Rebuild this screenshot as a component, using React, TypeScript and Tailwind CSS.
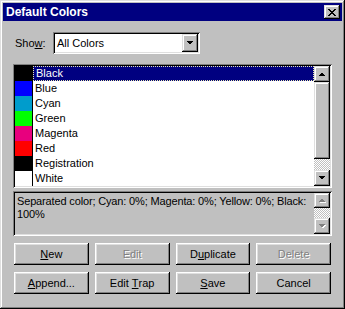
import React from "react";

const raised =
  "shadow-[inset_-1px_-1px_#000,inset_1px_1px_#fff,inset_-2px_-2px_#808080,inset_2px_2px_#dfdfdf]";
const sbBtn =
  "shadow-[inset_-1px_-1px_#000,inset_1px_1px_#dfdfdf,inset_-2px_-2px_#808080,inset_2px_2px_#fff]";
const sunken =
  "shadow-[inset_1px_1px_#808080,inset_-1px_-1px_#fff,inset_2px_2px_#000,inset_-2px_-2px_#dfdfdf]";
const checker =
  "bg-[repeating-conic-gradient(#fff_0_25%,#c0c0c0_0_50%)] bg-[length:2px_2px]";

const colors = [
  { name: "Black", swatch: "bg-black" },
  { name: "Blue", swatch: "bg-[#0000ff]" },
  { name: "Cyan", swatch: "bg-[#009ccc]" },
  { name: "Green", swatch: "bg-[#00ff00]" },
  { name: "Magenta", swatch: "bg-[#e8007e]" },
  { name: "Red", swatch: "bg-[#ff0000]" },
  { name: "Registration", swatch: "bg-black" },
  { name: "White", swatch: "bg-white" },
];

function Arrow({ dir, disabled }: { dir: "up" | "down"; disabled?: boolean }) {
  const pts = dir === "up" ? "0,4 7,4 3.5,0.5" : "0,0 7,0 3.5,3.5";
  return (
    <svg width="8" height="5" viewBox="0 0 8 5" shapeRendering="crispEdges">
      {disabled && <polygon points={pts} fill="#fff" transform="translate(1,1)" />}
      <polygon points={pts} fill={disabled ? "#808080" : "#000"} />
    </svg>
  );
}

function ScrollBtn({ dir, disabled, h = "h-[16px]" }: { dir: "up" | "down"; disabled?: boolean; h?: string }) {
  return (
    <div className={`w-[16px] ${h} bg-[#c0c0c0] flex items-center justify-center ${sbBtn}`}>
      <Arrow dir={dir} disabled={disabled} />
    </div>
  );
}

function Button({ children, disabled }: { children: React.ReactNode; disabled?: boolean }) {
  return (
    <div
      className={`h-[22px] flex items-center justify-center bg-[#c0c0c0] ${raised} ${
        disabled ? "text-[#808080] [text-shadow:1px_1px_0_#fff]" : "text-black"
      }`}
    >
      {children}
    </div>
  );
}

export default function App() {
  return (
    <div
      className={`w-[345px] h-[309px] bg-[#c0c0c0] p-[3px] flex flex-col font-['Liberation_Sans',Arial,sans-serif] text-[11px] text-black shadow-[inset_-1px_-1px_#000,inset_1px_1px_#dfdfdf,inset_-2px_-2px_#808080,inset_2px_2px_#fff]`}
    >
      {/* Title bar */}
      <div className="h-[18px] bg-[#000080] flex items-center justify-between pl-[3px] pr-[2px]">
        <span className="text-white font-bold text-[12px] leading-none">Default Colors</span>
        <div className={`w-[16px] h-[14px] bg-[#c0c0c0] flex items-center justify-center ${sbBtn}`}>
          <svg width="8" height="7" viewBox="0 0 8 7" shapeRendering="crispEdges">
            <path d="M0 0h2v1h-2zM6 0h2v1h-2zM1 1h2v1h-2zM5 1h2v1h-2zM2 2h4v1h-4zM3 3h2v1h-2zM2 4h4v1h-4zM1 5h2v1h-2zM5 5h2v1h-2zM0 6h2v1h-2zM6 6h2v1h-2z" fill="#000" />
          </svg>
        </div>
      </div>

      <div className="flex flex-col px-[10px] pt-[11px]">
        {/* Show row */}
        <div className="flex items-center h-[22px]">
          <span className="w-[40px] pl-[2px]">
            Sho<span className="underline">w</span>:
          </span>
          <div className={`w-[147px] h-[22px] bg-white flex items-center p-[2px] ${sunken}`}>
            <span className="flex-1 pl-[2px]">All Colors</span>
            <div className={`w-[16px] h-[18px] bg-[#c0c0c0] flex items-center justify-center ${sbBtn}`}>
              <Arrow dir="down" />
            </div>
          </div>
        </div>

        {/* Color list */}
        <div className={`mt-[10px] h-[124px] bg-white p-[2px] flex ${sunken}`}>
          <div className="flex-1 flex flex-col">
            {colors.map((c, i) => (
              <div key={c.name} className="h-[15px] flex">
                <div className={`w-[18px] h-full border-r border-black ${c.swatch}`} />
                <div
                  className={`flex-1 flex items-center pl-[2px] ${
                    i === 0
                      ? "bg-[#000080] text-white border border-dotted border-[#e8e8b0] pl-[1px]"
                      : ""
                  }`}
                >
                  {c.name}
                </div>
              </div>
            ))}
          </div>
          <div className="w-[16px] flex flex-col">
            <ScrollBtn dir="up" />
            <div className={`h-[77px] bg-[#c0c0c0] ${sbBtn}`} />
            <div className={`h-[11px] ${checker}`} />
            <ScrollBtn dir="down" />
          </div>
        </div>

        {/* Info box */}
        <div className={`mt-[3px] h-[45px] bg-[#c0c0c0] p-[2px] flex ${sunken}`}>
          <div className="flex-1 min-w-0 pl-[2px] pt-[2px] leading-[13px] whitespace-nowrap tracking-[-0.15px]">
            Separated color; Cyan: 0%; Magenta: 0%; Yellow: 0%; Black:
            <br />
            100%
          </div>
          <div className="w-[16px] flex flex-col">
            <ScrollBtn dir="up" disabled h="h-[15px]" />
            <div className={`flex-1 ${checker}`} />
            <ScrollBtn dir="down" disabled />
          </div>
        </div>

        {/* Buttons */}
        <div className="mt-[7px] mx-[1px] grid grid-cols-4 gap-x-[6px] gap-y-[7px]">
          <Button>
            <span className="underline">N</span>ew
          </Button>
          <Button disabled>Edit</Button>
          <Button>
            D<span className="underline">u</span>plicate
          </Button>
          <Button disabled>Delete</Button>
          <Button>
            <span className="underline">A</span>ppend...
          </Button>
          <Button>
            Edit <span className="underline ml-[3px]">T</span>rap
          </Button>
          <Button>
            <span className="underline">S</span>ave
          </Button>
          <Button>Cancel</Button>
        </div>
      </div>
    </div>
  );
}
